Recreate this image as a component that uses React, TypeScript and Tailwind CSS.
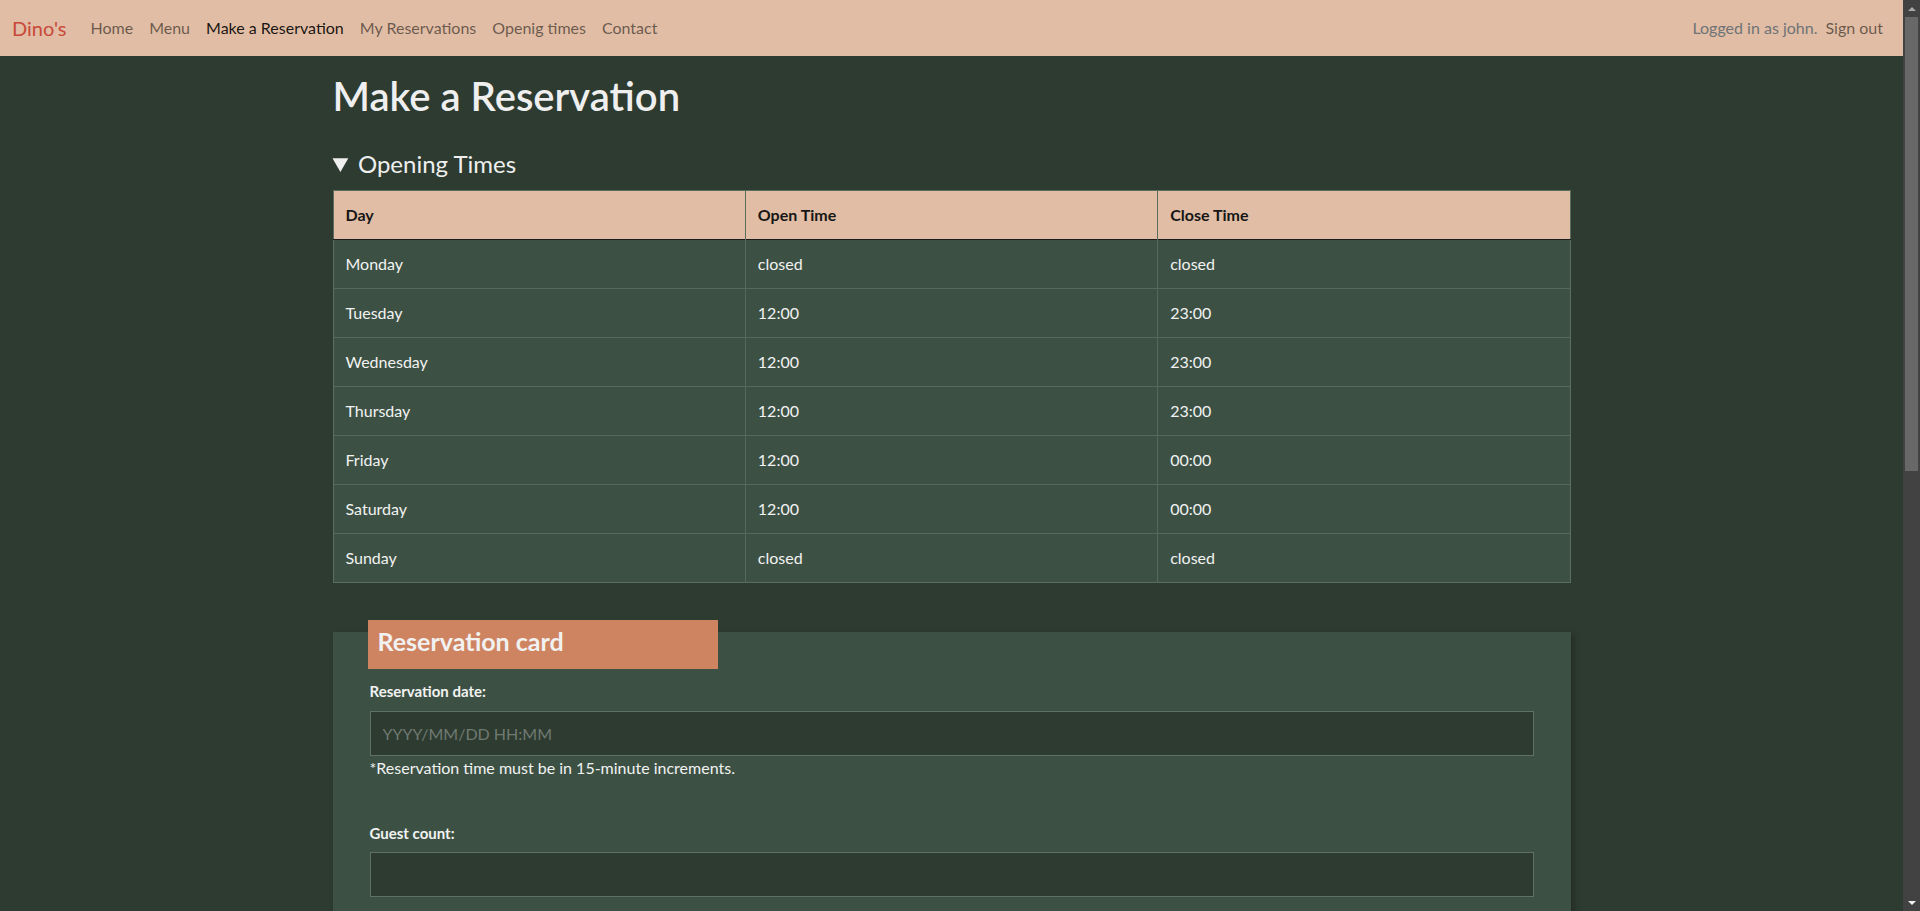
import React from "react";

const FONT = "font-['Lato','Open_Sans',sans-serif]";

const hours = [
  { day: "Monday", open: "closed", close: "closed" },
  { day: "Tuesday", open: "12:00", close: "23:00" },
  { day: "Wednesday", open: "12:00", close: "23:00" },
  { day: "Thursday", open: "12:00", close: "23:00" },
  { day: "Friday", open: "12:00", close: "00:00" },
  { day: "Saturday", open: "12:00", close: "00:00" },
  { day: "Sunday", open: "closed", close: "closed" },
];

function Navbar() {
  return (
    <nav className="h-[56px] shrink-0 bg-[#e0bda4] flex items-center justify-between px-3 text-[16px]">
      <div className="flex items-center">
        <a className="text-[20px] text-[#c9493a] mr-4 leading-[30px]">Dino's</a>
        <a className="px-2 text-black/55">Home</a>
        <a className="px-2 text-black/55">Menu</a>
        <a className="px-2 text-black/90">Make a Reservation</a>
        <a className="px-2 text-black/55">My Reservations</a>
        <a className="px-2 text-black/55">Openig times</a>
        <a className="px-2 text-black/55">Contact</a>
      </div>
      <div className="flex items-center">
        <span className="text-[#6f7377]">Logged in as john.</span>
        <a className="px-2 text-black/55">Sign out</a>
      </div>
    </nav>
  );
}

function HoursTable() {
  return (
    <table className="w-full table-fixed border-collapse border border-[#5a6e5f] text-[16px]">
      <thead>
        <tr className="bg-[#e0bda4] text-[#161616] border-b border-[#1b1b1b]">
          <th className="text-left font-bold p-3 leading-6 border-r border-[#5a6e5f]">Day</th>
          <th className="text-left font-bold p-3 leading-6 border-r border-[#5a6e5f]">Open Time</th>
          <th className="text-left font-bold p-3 leading-6">Close Time</th>
        </tr>
      </thead>
      <tbody className="bg-[#3c5144] text-[#f2f2f2]">
        {hours.map((h) => (
          <tr key={h.day} className="border-t border-[#57695b] first:border-t-0">
            <td className="p-3 leading-6 border-r border-[#57695b]">{h.day}</td>
            <td className="p-3 leading-6 border-r border-[#57695b]">{h.open}</td>
            <td className="p-3 leading-6">{h.close}</td>
          </tr>
        ))}
      </tbody>
    </table>
  );
}

function ReservationCard() {
  const inputCls =
    "w-full h-[45px] bg-[#2e3b30] border border-[#5e7262] px-3 text-[16px] text-[#eee] placeholder:text-[#6f7a72] outline-none";
  return (
    <div className="flow-root mt-[49px] bg-[#3c5144] shadow-[3px_2px_6px_rgba(0,0,0,0.25)] pb-10">
      <div className="-mt-3 ml-[35px] w-[350px] h-[49px] bg-[#cf8461] flex items-center pl-[10px] pb-[6px]">
        <h2 className="text-[25px] font-bold text-[#f1f1f1]">Reservation card</h2>
      </div>
      <div className="px-[37px] text-[#f2f2f2] text-[16px]">
        <label className="block mt-[10px] font-bold text-[15px] leading-6 mb-2">Reservation date:</label>
        <input className={inputCls} placeholder="YYYY/MM/DD HH:MM" />
        <p className="leading-6">*Reservation time must be in 15-minute increments.</p>
        <label className="block mt-[41px] font-bold text-[15px] leading-6 mb-[7px]">Guest count:</label>
        <input className={inputCls} />
      </div>
    </div>
  );
}

export default function App() {
  return (
    <div className={`${FONT} h-[911px] w-[1920px] flex overflow-hidden bg-[#2e3b30]`}>
      <div className="w-[1903px] h-[911px] flex flex-col overflow-hidden">
        <Navbar />
        <main className="w-[1238px] mx-auto">
          <h1 className="mt-4 text-[40px] leading-[48px] font-semibold text-[#efefef]">Make a Reservation</h1>
          <details open className="mt-[29px]">
            <summary className="text-[24px] leading-[29px] text-[#efefef] cursor-pointer mb-3">Opening Times</summary>
            <HoursTable />
          </details>
          <ReservationCard />
        </main>
      </div>
      <div className="w-[17px] h-[911px] bg-[#424242] flex flex-col items-center">
        <div className="h-[17px] flex items-center justify-center">
          <div className="w-0 h-0 border-l-[4px] border-r-[4px] border-b-[4px] border-l-transparent border-r-transparent border-b-[#a8a8a8]" />
        </div>
        <div className="w-[13px] h-[454px] bg-[#686868]" />
        <div className="flex-1" />
        <div className="h-[17px] flex items-center justify-center">
          <div className="w-0 h-0 border-l-[4px] border-r-[4px] border-t-[4px] border-l-transparent border-r-transparent border-t-[#f0f0f0]" />
        </div>
      </div>
    </div>
  );
}
